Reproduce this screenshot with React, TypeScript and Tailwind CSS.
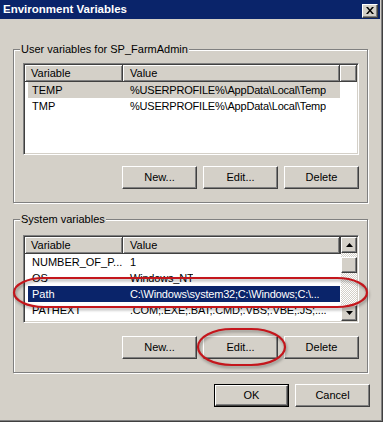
import React from 'react'

const raised =
  'bg-[#d4d0c8] border border-t-white border-l-white border-r-[#404040] border-b-[#404040] shadow-[inset_-1px_-1px_0_#808080]'

const headCell =
  'h-[17px] flex items-center bg-[#d4d0c8] border-r border-b border-r-[#404040] border-b-[#404040] shadow-[inset_1px_1px_0_#fff,inset_-1px_-1px_0_#808080]'

const sunken =
  'bg-white border border-t-[#808080] border-l-[#808080] border-r-white border-b-white shadow-[inset_1px_1px_0_#404040,inset_-1px_-1px_0_#d4d0c8] p-[1px] overflow-hidden'

const Button = ({ label, isDefault }: { label: string; isDefault?: boolean }) => {
  if (isDefault) {
    return (
      <div className="w-[75px] h-[23px] border border-black">
        <button className={`w-full h-full flex items-center justify-center text-[11px] text-black ${raised}`}>
          {label}
        </button>
      </div>
    )
  }
  return (
    <button className={`w-[75px] h-[23px] flex items-center justify-center text-[11px] text-black ${raised}`}>
      {label}
    </button>
  )
}

const GroupBox = ({ title, className, children }: { title: string; className: string; children: React.ReactNode }) => (
  <div
    className={`relative ml-[13px] w-[355px] border border-[#808080] shadow-[inset_1px_1px_0_#fff,1px_1px_0_#fff] pl-[9px] pr-[8px] pb-[13px] ${className}`}
  >
    <span className="absolute left-[6px] top-[-7px] px-[1px] bg-[#d4d0c8] leading-[13px] text-[11px] whitespace-nowrap">
      {title}
    </span>
    {children}
  </div>
)

const Header = () => (
  <div className="flex">
    <div className={`w-[98px] pl-[6px] ${headCell}`}>Variable</div>
    <div className={`w-[217px] pl-[7px] ${headCell}`}>Value</div>
    <div className={`flex-1 ${headCell}`} />
  </div>
)

type Row = { name: string; value: string; state?: 'selected' | 'inactive' }

const Rows = ({ rows }: { rows: Row[] }) => (
  <>
    {rows.map(r => (
      <div
        key={r.name}
        className={
          r.state === 'selected'
            ? 'ml-[3px] w-[312px] h-[16px] flex items-center bg-[#0a246a] text-white'
            : r.state === 'inactive'
              ? 'ml-[3px] w-[312px] h-[16px] flex items-center bg-[#d4d0c8] text-black'
              : 'ml-[3px] w-[312px] h-[16px] flex items-center text-black'
        }
      >
        <div className="w-[95px] pl-[4px] whitespace-nowrap overflow-hidden">{r.name}</div>
        <div className="pl-[7px] whitespace-nowrap overflow-hidden tracking-[-0.2px]">{r.value}</div>
      </div>
    ))}
  </>
)

const Arrow = ({ down }: { down?: boolean }) => (
  <svg width="7" height="4" viewBox="0 0 7 4">
    <path d={down ? 'M0 0h7L3.5 4z' : 'M3.5 0L7 4H0z'} fill="#000" />
  </svg>
)

const userRows: Row[] = [
  { name: 'TEMP', value: '%USERPROFILE%\\AppData\\Local\\Temp', state: 'inactive' },
  { name: 'TMP', value: '%USERPROFILE%\\AppData\\Local\\Temp' }
]

const systemRows: Row[] = [
  { name: 'NUMBER_OF_P...', value: '1' },
  { name: 'OS', value: 'Windows_NT' },
  { name: 'Path', value: 'C:\\Windows\\system32;C:\\Windows;C:\\...', state: 'selected' },
  { name: 'PATHEXT', value: '.COM;.EXE;.BAT;.CMD;.VBS;.VBE;.JS;....' }
]

export default function App() {
  return (
    <div className="relative w-[383px] h-[422px] overflow-hidden bg-[#d4d0c8] text-[11px] text-black font-['Liberation_Sans',Arial,sans-serif] shadow-[inset_-1px_-1px_0_#404040,inset_-2px_-2px_0_#808080]">
      <div className="flex flex-col w-[380px] h-[419px]">
        {/* title bar */}
        <div className="h-[19px] flex items-center justify-between pl-[3px] pr-[2px] bg-[#0a246a]">
          <span className="text-white font-bold text-[11.5px]">Environment Variables</span>
          <div className={`w-[16px] h-[14px] mt-[2px] flex items-center justify-center ${raised}`}>
            <svg width="8" height="7" viewBox="0 0 8 7">
              <path d="M0 0h2l2 2.4L6 0h2L5 3.5 8 7H6L4 4.6 2 7H0l3-3.5z" fill="#000" />
            </svg>
          </div>
        </div>

        <GroupBox title="User variables for SP_FarmAdmin" className="mt-[30px] pt-[13px]">
          <div className={`w-[336px] h-[92px] ${sunken}`}>
            <Header />
            <Rows rows={userRows} />
          </div>
          <div className="mt-[11px] flex justify-end gap-[6px]">
            <Button label="New..." />
            <Button label="Edit..." />
            <Button label="Delete" />
          </div>
        </GroupBox>

        <GroupBox title="System variables" className="mt-[16px] pt-[15px]">
          <div className={`w-[336px] h-[88px] flex ${sunken}`}>
            <div className="flex-1 overflow-hidden">
              <Header />
              <Rows rows={systemRows} />
            </div>
            <div className="w-[16px] flex flex-col">
              <div className={`h-[16px] flex items-center justify-center ${raised}`}>
                <Arrow />
              </div>
              <div className="flex-1 bg-[image:repeating-conic-gradient(#d4d0c8_0%_25%,#ffffff_0%_50%)] bg-[length:2px_2px]">
                <div className={`mt-[4px] h-[16px] ${raised}`} />
              </div>
              <div className={`h-[16px] flex items-center justify-center ${raised}`}>
                <Arrow down />
              </div>
            </div>
          </div>
          <div className="mt-[13px] flex justify-end gap-[6px]">
            <Button label="New..." />
            <Button label="Edit..." />
            <Button label="Delete" />
          </div>
        </GroupBox>

        <div className="mt-[11px] pr-[10px] flex justify-end gap-[6px]">
          <Button label="OK" isDefault />
          <Button label="Cancel" />
        </div>
      </div>

      {/* red annotation marks */}
      <svg
        className="absolute inset-0 pointer-events-none drop-shadow-[1px_2px_1.5px_rgba(0,0,0,0.35)]"
        width="383"
        height="422"
        viewBox="0 0 383 422"
      >
        <rect x="14" y="278" width="353" height="29" rx="30" ry="14.5" fill="none" stroke="#c4161c" strokeWidth="2.2" />
        <rect x="198" y="329" width="87" height="36" rx="34" ry="18" fill="none" stroke="#c4161c" strokeWidth="2.2" />
      </svg>
    </div>
  )
}
